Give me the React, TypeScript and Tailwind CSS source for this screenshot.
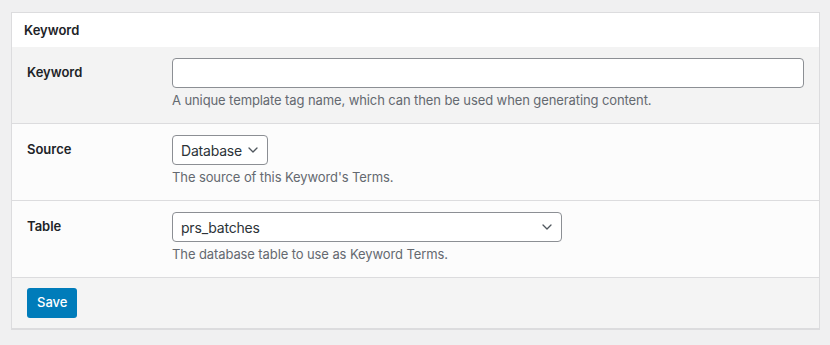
import React from 'react';

const font = { fontFamily: 'Inter, "Noto Sans", "Liberation Sans", sans-serif' };

function Chevron() {
  return (
    <svg width="10" height="6" viewBox="0 0 10 6" fill="none" className="shrink-0">
      <path d="M1 1l4 4 4-4" stroke="#50575e" strokeWidth="1.3" strokeLinecap="round" strokeLinejoin="round" />
    </svg>
  );
}

function SelectBox({ value, width }: { value: string; width: string }) {
  return (
    <div
      className={`${width} h-[30px] flex items-center justify-between pl-[8px] pr-[9px] bg-white border border-[#8c8f94] rounded-[4px] text-[14px] tracking-[-0.2px] text-[#2c3338]`}
    >
      <span>{value}</span>
      <Chevron />
    </div>
  );
}

function Row({
  label,
  help,
  striped,
  children,
}: {
  label: string;
  help: string;
  striped?: boolean;
  children: React.ReactNode;
}) {
  return (
    <div
      className={`flex pt-[11px] pb-[14px] border-b border-[#dcdcde] ${striped ? 'bg-[#f3f3f3]' : 'bg-[#fcfcfc]'}`}
    >
      <div className="w-[160px] pl-[15px] text-[13px] font-semibold leading-[28px] text-[#1d2327]">{label}</div>
      <div className="flex-1 pr-[15px]">
        {children}
        <p className="mt-[3px] text-[13px] leading-[18px] tracking-[-0.1px] text-[#646970]">{help}</p>
      </div>
    </div>
  );
}

export default function App() {
  return (
    <div className="min-h-[345px] bg-[#f0f0f1] pt-[12px] pl-[11px] pr-[10px]" style={font}>
      <div className="border border-b-2 border-[#dcdcde]">
        <div className="h-[34px] flex items-center pt-[2px] px-[12px] bg-white text-[13px] font-semibold text-[#1d2327]">
          Keyword
        </div>

        <Row label="Keyword" help="A unique template tag name, which can then be used when generating content." striped>
          <input
            type="text"
            className="block w-full h-[30px] px-[8px] bg-white border border-[#8c8f94] rounded-[4px] text-[14px] outline-none"
          />
        </Row>

        <Row label="Source" help="The source of this Keyword's Terms.">
          <SelectBox value="Database" width="w-[96px]" />
        </Row>

        <Row label="Table" help="The database table to use as Keyword Terms.">
          <SelectBox value="prs_batches" width="w-[390px]" />
        </Row>

        <div className="h-[50px] flex items-center px-[15px] bg-[#f4f4f4]">
          <button className="h-[30px] px-[10px] rounded-[3px] bg-[#007cba] text-white text-[13px] font-medium">
            Save
          </button>
        </div>
      </div>
    </div>
  );
}
